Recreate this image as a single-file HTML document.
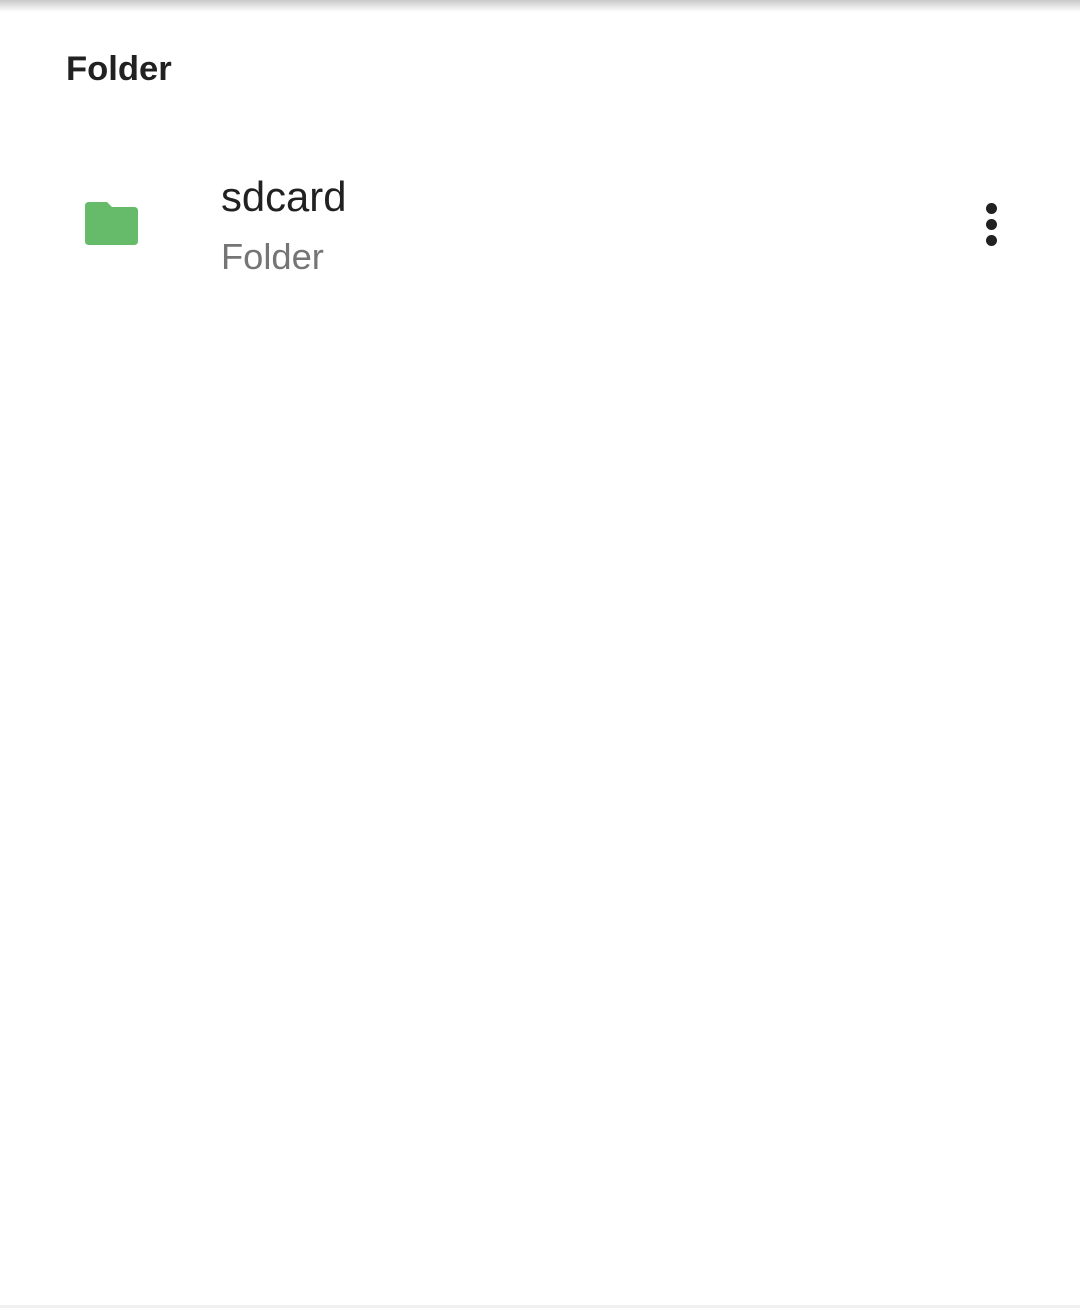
<!DOCTYPE html>
<html><head><style>
body{margin:0;width:1080px;height:1308px;background:#fff;position:relative;overflow:hidden;font-family:"Liberation Sans",sans-serif}
.sh{position:absolute;left:0;top:0;width:1080px;height:12px;background:linear-gradient(#c8c8c8,rgba(255,255,255,0))}
.t{position:absolute;left:66px;top:50px;font-size:34.6px;font-weight:bold;color:#212121}
.n{position:absolute;left:221px;top:173px;font-size:41.8px;color:#212121}
.s{position:absolute;left:221px;top:236px;font-size:36.3px;color:#757575}
.d{position:absolute;left:986px;width:11px;height:11px;border-radius:50%;background:#212121}
.b{position:absolute;left:0;bottom:0;width:1080px;height:3px;background:#f0f0f0}
</style></head><body>
<div class="sh"></div>
<div class="t">Folder</div>
<svg style="position:absolute;left:85px;top:202px" width="53" height="43" viewBox="0 0 53 43"><path d="M4 0H22L27 5H49Q53 5 53 9V39Q53 43 49 43H4Q0 43 0 39V4Q0 0 4 0Z" fill="#66bb6a"/></svg>
<div class="n">sdcard</div>
<div class="s">Folder</div>
<div class="d" style="top:203px"></div><div class="d" style="top:219px"></div><div class="d" style="top:235px"></div>
<div class="b"></div>
</body></html>
